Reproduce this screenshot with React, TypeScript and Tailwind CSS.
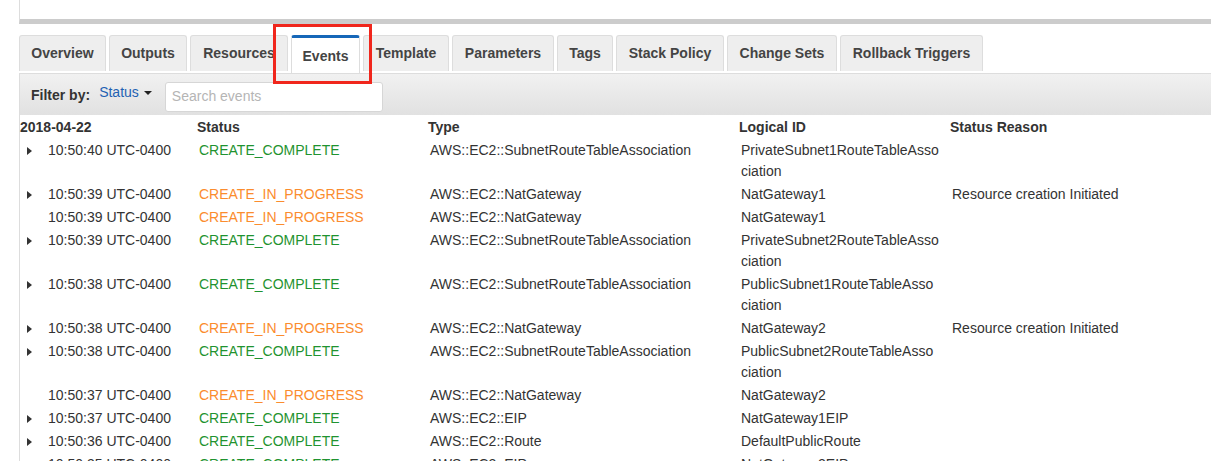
import React from 'react';

type Row = {
  arrow: boolean;
  time: string;
  status: 'CREATE_COMPLETE' | 'CREATE_IN_PROGRESS';
  type: string;
  logical: string[];
  reason?: string;
};

const tabs: { label: string; w: string }[] = [
  { label: 'Overview', w: 'w-[87px]' },
  { label: 'Outputs', w: 'w-[78px]' },
  { label: 'Resources', w: 'w-[98px]' },
  { label: 'Events', w: 'w-[69px]' },
  { label: 'Template', w: 'w-[86px]' },
  { label: 'Parameters', w: 'w-[102px]' },
  { label: 'Tags', w: 'w-[56px]' },
  { label: 'Stack Policy', w: 'w-[108px]' },
  { label: 'Change Sets', w: 'w-[110px]' },
  { label: 'Rollback Triggers', w: 'w-[143px]' },
];

const rows: Row[] = [
  { arrow: true, time: '10:50:40 UTC-0400', status: 'CREATE_COMPLETE', type: 'AWS::EC2::SubnetRouteTableAssociation', logical: ['PrivateSubnet1RouteTableAsso', 'ciation'] },
  { arrow: true, time: '10:50:39 UTC-0400', status: 'CREATE_IN_PROGRESS', type: 'AWS::EC2::NatGateway', logical: ['NatGateway1'], reason: 'Resource creation Initiated' },
  { arrow: false, time: '10:50:39 UTC-0400', status: 'CREATE_IN_PROGRESS', type: 'AWS::EC2::NatGateway', logical: ['NatGateway1'] },
  { arrow: true, time: '10:50:39 UTC-0400', status: 'CREATE_COMPLETE', type: 'AWS::EC2::SubnetRouteTableAssociation', logical: ['PrivateSubnet2RouteTableAsso', 'ciation'] },
  { arrow: true, time: '10:50:38 UTC-0400', status: 'CREATE_COMPLETE', type: 'AWS::EC2::SubnetRouteTableAssociation', logical: ['PublicSubnet1RouteTableAsso', 'ciation'] },
  { arrow: true, time: '10:50:38 UTC-0400', status: 'CREATE_IN_PROGRESS', type: 'AWS::EC2::NatGateway', logical: ['NatGateway2'], reason: 'Resource creation Initiated' },
  { arrow: true, time: '10:50:38 UTC-0400', status: 'CREATE_COMPLETE', type: 'AWS::EC2::SubnetRouteTableAssociation', logical: ['PublicSubnet2RouteTableAsso', 'ciation'] },
  { arrow: false, time: '10:50:37 UTC-0400', status: 'CREATE_IN_PROGRESS', type: 'AWS::EC2::NatGateway', logical: ['NatGateway2'] },
  { arrow: true, time: '10:50:37 UTC-0400', status: 'CREATE_COMPLETE', type: 'AWS::EC2::EIP', logical: ['NatGateway1EIP'] },
  { arrow: true, time: '10:50:36 UTC-0400', status: 'CREATE_COMPLETE', type: 'AWS::EC2::Route', logical: ['DefaultPublicRoute'] },
  { arrow: true, time: '10:50:35 UTC-0400', status: 'CREATE_COMPLETE', type: 'AWS::EC2::EIP', logical: ['NatGateway2EIP'] },
];

const cols = 'grid grid-cols-[177px_231px_311px_211px_1fr]';

const App: React.FC = () => {
  return (
    <div className="relative w-[1211px] h-[461px] overflow-hidden bg-white font-['Liberation_Sans',Arial,sans-serif] text-[14px] text-[#333]">
      {/* stack detail panel above (cut off) */}
      <div className="ml-[19px] h-[24px] border-l border-[#ddd] border-b-[5px] border-b-[#cccccc]" />

      {/* tabs */}
      <div className="ml-[19px] mt-[11px] mb-[2px] flex gap-[3px]">
        {tabs.map((t) =>
          t.label === 'Events' ? (
            <div
              key={t.label}
              className={`${t.w} h-[38px] -mb-[2px] flex items-center justify-center bg-white border border-[#ddd] border-t-[3px] border-t-[#1667b8] border-b-0 rounded-t-[3px] font-bold text-[#444] pt-[2px]`}
            >
              {t.label}
            </div>
          ) : (
            <div
              key={t.label}
              className={`${t.w} h-[36px] flex items-center justify-center bg-[#eeeeee] border border-[#dddddd] border-b-0 rounded-t-[3px] font-bold text-[#444]`}
            >
              {t.label}
            </div>
          )
        )}
      </div>

      {/* filter bar */}
      <div className="ml-[19px] h-[42px] border-l border-t border-[#dddddd] bg-gradient-to-b from-[#f1f1f1] to-[#e1e1e1] flex items-center pl-[11px]">
        <span className="font-bold text-[#333] mt-[2px]">Filter by:</span>
        <span className="ml-[9px] mb-[4px] text-[#1f62b3] flex items-center">
          Status
          <span className="ml-[5px] w-0 h-0 border-l-[4px] border-r-[4px] border-t-[4px] border-l-transparent border-r-transparent border-t-[#222]" />
        </span>
        <div className="ml-[13px] mt-[4px] w-[218px] h-[30px] bg-white border border-[#d6d6d6] rounded-[3px] flex items-center pl-[6px] text-[#b5b5b5]">
          Search events
        </div>
      </div>

      {/* events table */}
      <div className="ml-[19px] border-l border-[#dddddd]">
        <div className={`${cols} h-[24px] leading-[24px] font-bold text-[#333]`}>
          <div>2018-04-22</div>
          <div>Status</div>
          <div>Type</div>
          <div>Logical ID</div>
          <div>Status Reason</div>
        </div>
        {rows.map((r, i) => (
          <div key={i} className={`${cols} py-[1px] leading-[21px]`}>
            <div className="flex">
              <span className="w-[28px] pl-[7px] h-[21px] flex items-center">
                {r.arrow && (
                  <span className="w-0 h-0 border-t-[4px] border-b-[4px] border-l-[5px] border-t-transparent border-b-transparent border-l-[#333]" />
                )}
              </span>
              <span>{r.time}</span>
            </div>
            <div className={`pl-[2px] ${r.status === 'CREATE_COMPLETE' ? 'text-[#1f9330]' : 'text-[#fb8c2e]'}`}>
              {r.status}
            </div>
            <div className="pl-[2px]">{r.type}</div>
            <div className="pl-[2px]">
              {r.logical.map((l) => (
                <div key={l}>{l}</div>
              ))}
            </div>
            <div className="pl-[2px]">{r.reason ?? ''}</div>
          </div>
        ))}
      </div>

      {/* annotation around Events tab */}
      <div className="absolute left-[273px] top-[24px] w-[99px] h-[60px] border-[3px] border-[#f0261c] pointer-events-none" />
    </div>
  );
};

export default App;
